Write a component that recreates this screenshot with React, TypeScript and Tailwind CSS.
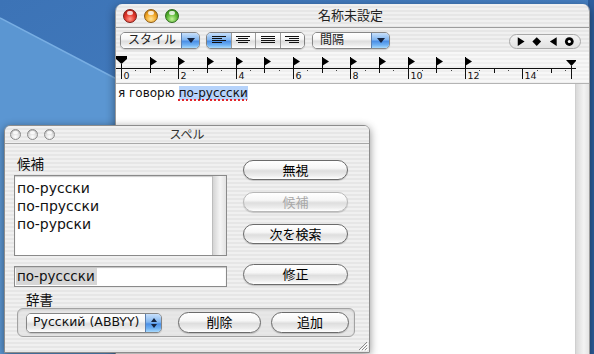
import React from "react";

const F = "font-['DejaVu_Sans','Noto_Sans_CJK_JP',sans-serif]";
const pin =
  "bg-[image:repeating-linear-gradient(180deg,#f0f0f0_0px,#f0f0f0_2px,#e6e6e6_2px,#e6e6e6_4px)]";
const pinLight =
  "bg-[image:repeating-linear-gradient(180deg,#f7f7f7_0px,#f7f7f7_2px,#efefef_2px,#efefef_4px)]";
const glossWhite =
  "bg-[image:linear-gradient(180deg,#ffffff_0%,#f6f6f6_40%,#dedede_55%,#ececec_80%,#ffffff_100%)]";
const glossBlue =
  "bg-[image:linear-gradient(180deg,#c8e0fb_0%,#82b6f0_45%,#4b8fe6_55%,#6fb1f3_80%,#a9dafc_100%)]";

function Light({ kind, size }: { kind: "r" | "y" | "g" | "off"; size: "big" | "small" }) {
  const dim = size === "big" ? "w-[14px] h-[14px]" : "w-[11px] h-[11px]";
  const col =
    kind === "r"
      ? "border-[#7c1a14] bg-[image:radial-gradient(circle_at_50%_75%,#ff9c8c_0%,#e5392e_45%,#9c140d_100%)]"
      : kind === "y"
      ? "border-[#8c5a12] bg-[image:radial-gradient(circle_at_50%_75%,#ffe49a_0%,#f2a623_50%,#a8650a_100%)]"
      : kind === "g"
      ? "border-[#2d6a1c] bg-[image:radial-gradient(circle_at_50%_75%,#c4f59a_0%,#58b532_50%,#2a7612_100%)]"
      : "border-[#8a8a8a] bg-[image:radial-gradient(circle_at_50%_75%,#ffffff_0%,#dedede_50%,#a9a9a9_100%)]";
  const hl = size === "big" ? "left-[3px] top-[1px] w-[6px] h-[4px]" : "left-[2px] top-[1px] w-[5px] h-[3px]";
  return (
    <div className={`relative rounded-full border ${dim} ${col}`}>
      <div className={`absolute rounded-full bg-white/80 ${hl}`} />
    </div>
  );
}

function AquaButton({ label, disabled, className }: { label: string; disabled?: boolean; className: string }) {
  return (
    <div
      className={`flex items-center justify-center rounded-full border ${
        disabled ? "border-[#b8b8b8] text-[#a8a8a8]" : "border-[#6b6b6b] text-black"
      } ${glossWhite} shadow-[0_1px_1px_rgba(0,0,0,0.18)] text-[13px] leading-none ${className}`}
    >
      {label}
    </div>
  );
}

function ToolPopup({ label, className }: { label: string; className: string }) {
  return (
    <div className={`flex h-[17px] rounded-[5px] border border-[#878787] overflow-hidden shadow-[0_1px_1px_rgba(0,0,0,0.15)] ${className}`}>
      <div className={`flex-1 flex items-center pl-[7px] text-[12px] leading-none text-[#222] ${glossWhite}`}>{label}</div>
      <div className={`w-[18px] flex items-center justify-center border-l border-[#5b7fb0] ${glossBlue}`}>
        <svg width="8" height="5" viewBox="0 0 8 5">
          <path d="M0 0H8L4 5Z" fill="#15233f" />
        </svg>
      </div>
    </div>
  );
}

function AlignIcon({ mode }: { mode: "l" | "c" | "j" | "r" }) {
  const rows = [0, 1, 2, 3];
  const W = 14;
  return (
    <svg width="14" height="8" viewBox="0 0 14 8">
      {rows.map((i) => {
        const full = mode === "j" || i % 2 === 0;
        const len = full ? W : 10;
        let x = 0;
        if (mode === "c") x = (W - len) / 2;
        if (mode === "r") x = W - len;
        return <rect key={i} x={x} y={i * 2} width={len} height={1} fill="#111" />;
      })}
    </svg>
  );
}

function Ruler() {
  const u = 28.67;
  const x0 = 5;
  const items: React.ReactNode[] = [];
  for (let k = 0; k <= 15; k++) {
    const x = Math.round(x0 + k * u) + 0.5;
    if (k % 2 === 0 && k <= 14) {
      items.push(<line key={"t" + k} x1={x} y1={16} x2={x} y2={27} stroke="#111" strokeWidth={1} />);
      items.push(
        <text key={"n" + k} x={x + 2} y={27} fontSize="9.5" fill="#111" fontFamily="DejaVu Sans, sans-serif">
          {k}
        </text>
      );
    } else if (k <= 15) {
      items.push(<line key={"h" + k} x1={x} y1={16} x2={x} y2={21} stroke="#111" strokeWidth={1} />);
    }
    const hx = Math.round(x0 + (k + 0.5) * u) + 0.5;
    if (hx < 455) items.push(<rect key={"d" + k} x={hx - 0.5} y={18} width={1} height={1} fill="#444" />);
  }
  for (let k = 1; k <= 12; k++) {
    const x = Math.round(x0 + k * u);
    items.push(<rect key={"s" + k} x={x} y={5} width={1} height={11} fill="#000" />);
    items.push(<path key={"f" + k} d={`M${x} 5 L${x + 7} 9.5 L${x} 14 Z`} fill="#000" />);
  }
  return (
    <svg width="460" height="31" viewBox="0 0 460 31" className="block">
      <line x1={0} y1={16.5} x2={460} y2={16.5} stroke="#111" strokeWidth={1} />
      {items}
      <rect x={0} y={4} width={11} height={3} fill="#000" />
      <path d="M0 7 H11 L5.5 12 Z" fill="#000" />
      <rect x={5} y={12} width={1} height={4} fill="#000" />
      <path d="M450 8 H461 L455.5 14 Z" fill="#000" />
      <line x1={455.5} y1={14} x2={455.5} y2={27} stroke="#111" strokeWidth={1} />
    </svg>
  );
}

export default function App() {
  return (
    <div className={`relative w-[594px] h-[354px] overflow-hidden bg-[#4a82c3] ${F}`}>
      {/* desktop artwork */}
      <svg className="absolute inset-0" width="594" height="354" viewBox="0 0 594 354">
        <defs>
          <linearGradient id="dk" x1="0" y1="0" x2="1" y2="1">
            <stop offset="0" stopColor="#3c73b6" />
            <stop offset="1" stopColor="#4f8acb" />
          </linearGradient>
        </defs>
        <rect width="594" height="354" fill="url(#dk)" />
        <path d="M0 18 L130 86 L130 354 L0 354 Z" fill="#5b96d2" />
        <path d="M0 18 L130 86" stroke="#78aee3" strokeWidth="1.5" fill="none" />
        <rect x="588" y="0" width="6" height="354" fill="#2d5f9f" />
      </svg>

      {/* main TextEdit window */}
      <div className="absolute left-[115px] top-[4px] w-[475px] h-[360px] rounded-t-[7px] overflow-hidden flex flex-col shadow-[0_3px_10px_rgba(0,0,0,0.45)] border-x border-[#9a9a9a]">
        <div className={`grid grid-cols-[1fr_auto_1fr] items-center h-[23px] ${pin}`}>
          <div className="flex items-center gap-[7px] pl-[7px]">
            <Light kind="r" size="big" />
            <Light kind="y" size="big" />
            <Light kind="g" size="big" />
          </div>
          <div className="text-[13px] leading-none text-[#222] pr-[4px]">名称未設定</div>
          <div />
        </div>
        <div className="h-px bg-[#9c9c9c]" />
        <div className={`flex items-center h-[24px] pl-[4px] pr-[8px] ${pin}`}>
          <ToolPopup label="スタイル" className="w-[80px]" />
          <div className="ml-[6px] flex h-[17px] w-[99px] rounded-[5px] border border-[#808080] overflow-hidden shadow-[0_1px_1px_rgba(0,0,0,0.15)]">
            <div className={`flex-1 flex items-center justify-center ${glossBlue}`}>
              <AlignIcon mode="l" />
            </div>
            <div className={`flex-1 flex items-center justify-center border-l border-[#9a9a9a] ${glossWhite}`}>
              <AlignIcon mode="c" />
            </div>
            <div className={`flex-1 flex items-center justify-center border-l border-[#9a9a9a] ${glossWhite}`}>
              <AlignIcon mode="j" />
            </div>
            <div className={`flex-1 flex items-center justify-center border-l border-[#9a9a9a] ${glossWhite}`}>
              <AlignIcon mode="r" />
            </div>
          </div>
          <ToolPopup label="間隔" className="ml-[7px] w-[78px]" />
          <div className="ml-auto mt-[2px] flex items-center h-[15px] w-[72px] rounded-full border border-[#a9a9a9] bg-[image:linear-gradient(180deg,#f4f4f4,#e2e2e2)]">
            <svg width="72" height="13" viewBox="0 0 72 13">
              <path d="M8 2 L15 6.5 L8 11 Z" fill="#000" />
              <path d="M27.5 2 L32 6.5 L27.5 11 L23 6.5 Z" fill="#000" />
              <path d="M48 2 L41 6.5 L48 11 Z" fill="#000" />
              <circle cx="61" cy="6.5" r="4.5" fill="#000" />
              <circle cx="61" cy="6.5" r="1.6" fill="#fff" />
            </svg>
          </div>
        </div>
        <div className={`h-[32px] ${pinLight} border-b border-[#b4b4b4] flex`}>
          <Ruler />
        </div>
        <div className="flex flex-1">
          <div className="w-[459px] bg-white">
            <div className="pl-[2px] pt-[2px] text-[12px] leading-[15px] text-[#111]">
              я говорю{" "}
              <span className="bg-[#b6d3fb] underline decoration-dotted decoration-[#e3262b] decoration-[1.5px] underline-offset-[2px]">
                по-руссски
              </span>
            </div>
          </div>
          <div className="w-[14px] border-l border-[#cfcfcf] bg-[image:linear-gradient(90deg,#d9d9d9,#f3f3f3_60%,#e4e4e4)]" />
        </div>
      </div>

      {/* Spelling panel */}
      <div className="absolute left-[4px] top-[125px] w-[366px] h-[228px] rounded-t-[6px] overflow-hidden flex flex-col border border-[#8c8c8c] shadow-[0_2px_8px_rgba(0,0,0,0.45)]">
        <div className={`grid grid-cols-[1fr_auto_1fr] items-center h-[17px] ${pin}`}>
          <div className="flex items-center gap-[6px] pl-[5px]">
            <Light kind="off" size="small" />
            <Light kind="off" size="small" />
            <Light kind="off" size="small" />
          </div>
          <div className="text-[12px] leading-none text-[#333]">スペル</div>
          <div />
        </div>
        <div className="h-px bg-[#a8a8a8]" />
        <div className={`relative flex-1 flex flex-col pl-[9px] ${pin}`}>
          <div className="flex">
            <div className="w-[213px] pt-[12px] flex flex-col">
              <div className="h-[16px] leading-[16px] pl-[3px] text-[13.5px] text-[#111]">候補</div>
              <div className="mt-[3px] h-[81px] flex border border-[#8a8a8a] bg-white shadow-[inset_0_1px_1px_rgba(0,0,0,0.2)]">
                <div className="flex-1 pl-[2px] pt-[3px] text-[14px] leading-[18px] text-[#111]">
                  <div>по-русски</div>
                  <div>по-прусски</div>
                  <div>по-рурски</div>
                </div>
                <div className="w-[14px] border-l border-[#bdbdbd] bg-[image:linear-gradient(90deg,#d4d4d4,#f5f5f5_55%,#e3e3e3)]" />
              </div>
              <div className="mt-[10px] h-[21px] flex items-center pl-[1px] border border-[#8a8a8a] bg-white shadow-[inset_0_1px_1px_rgba(0,0,0,0.25)]">
                <span className="bg-[#d6d6d6] pl-[1px] pr-[2px] text-[13.5px] leading-[17px] text-[#111]">по-руссски</span>
              </div>
            </div>
            <div className="ml-[16px] w-[105px] flex flex-col pt-[16px]">
              <AquaButton label="無視" className="h-[20px]" />
              <AquaButton label="候補" disabled className="h-[20px] mt-[12px]" />
              <AquaButton label="次を検索" className="h-[20px] mt-[12px]" />
              <AquaButton label="修正" className="h-[21px] mt-[20px]" />
            </div>
          </div>
          <div className="mt-[5px] h-[16px] leading-[16px] pl-[12px] text-[13.5px] text-[#111]">辞書</div>
          <div className="ml-[3px] w-[338px] h-[29px] flex items-center pl-[8px] rounded-[6px] border border-[#a2a2a2] bg-[#e2e2e2]/70 shadow-[inset_0_1px_2px_rgba(0,0,0,0.12)]">
            <div className="flex h-[20px] w-[136px] rounded-[5px] border border-[#858585] overflow-hidden shadow-[0_1px_1px_rgba(0,0,0,0.15)]">
              <div className={`flex-1 flex items-center pl-[6px] text-[12.5px] leading-none text-[#111] ${glossWhite}`}>Русский (ABBYY)</div>
              <div className={`w-[16px] flex flex-col items-center justify-center gap-[2px] border-l border-[#5b7fb0] ${glossBlue}`}>
                <svg width="6" height="4" viewBox="0 0 6 4">
                  <path d="M3 0L6 4H0Z" fill="#15233f" />
                </svg>
                <svg width="6" height="4" viewBox="0 0 6 4">
                  <path d="M0 0H6L3 4Z" fill="#15233f" />
                </svg>
              </div>
            </div>
            <AquaButton label="削除" className="ml-[16px] w-[83px] h-[21px]" />
            <AquaButton label="追加" className="ml-[10px] w-[78px] h-[21px]" />
          </div>
          <svg className="absolute right-[1px] bottom-[1px]" width="11" height="11" viewBox="0 0 11 11">
            <path d="M10 2 L2 10 M10 5 L5 10 M10 8 L8 10" stroke="#8a8a8a" strokeWidth="1" />
            <path d="M11 3 L3 11 M11 6 L6 11 M11 9 L9 11" stroke="#fff" strokeWidth="1" />
          </svg>
        </div>
      </div>
    </div>
  );
}
